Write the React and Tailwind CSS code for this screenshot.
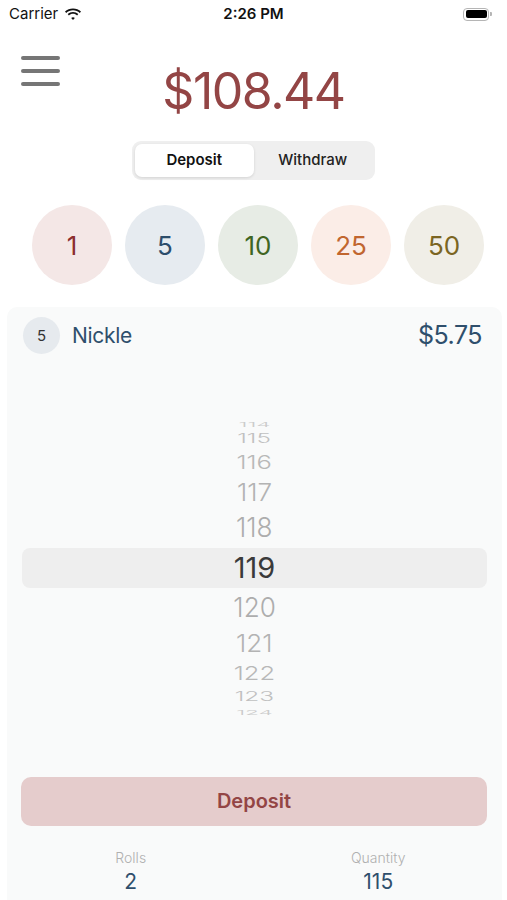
import React from "react";

const coins = [
  { v: "1", bg: "bg-[#f4e7e6]", fg: "text-[#8c2f2f]" },
  { v: "5", bg: "bg-[#e6ebf0]", fg: "text-[#2c4d6b]" },
  { v: "10", bg: "bg-[#e7ece5]", fg: "text-[#3f6522]" },
  { v: "25", bg: "bg-[#fbede7]", fg: "text-[#c1662f]" },
  { v: "50", bg: "bg-[#f0eee7]", fg: "text-[#7b6522]" },
];

const picker = [
  { n: "114", h: "h-[10px]", t: "font-light scale-x-[0.78] scale-y-[0.22] text-[#cbcbcb]" },
  { n: "115", h: "h-[18px]", t: "font-light scale-x-[0.84] scale-y-[0.45] text-[#c0c0c0]" },
  { n: "116", h: "h-[30px]", t: "font-light scale-x-[0.88] scale-y-[0.65] text-[#b8b8b8]" },
  { n: "117", h: "h-[30px]", t: "font-light scale-x-[0.9] scale-y-[0.82] text-[#b3b3b3]" },
  { n: "118", h: "h-[40px]", t: "font-light scale-x-[0.9] scale-y-[0.94] text-[#adadad]" },
  { n: "119", h: "h-[40px]", t: "font-normal text-[#3a3a3a]", sel: true },
  { n: "120", h: "h-[40px]", t: "font-light scale-x-[0.9] scale-y-[0.94] text-[#adadad]" },
  { n: "121", h: "h-[32px]", t: "font-light scale-x-[0.9] scale-y-[0.82] text-[#b3b3b3]" },
  { n: "122", h: "h-[28px]", t: "font-light scale-x-[0.88] scale-y-[0.65] text-[#b8b8b8]" },
  { n: "123", h: "h-[18px]", t: "font-light scale-x-[0.84] scale-y-[0.45] text-[#c0c0c0]" },
  { n: "124", h: "h-[14px]", t: "font-light scale-x-[0.78] scale-y-[0.22] text-[#cbcbcb]" },
];

function Wifi() {
  return (
    <svg width="18" height="13" viewBox="0 0 18 13" className="ml-[6px]">
      <path d="M9 2.2c2.6 0 5 1 6.8 2.7l1.2-1.3C14.9 1.6 12.1.4 9 .4S3.1 1.6 1 3.6l1.2 1.3C4 3.2 6.4 2.2 9 2.2z" fill="#111" />
      <path d="M9 5.8c1.6 0 3 .6 4.1 1.6l1.2-1.3C12.9 4.8 11 4 9 4s-3.9.8-5.3 2.1l1.2 1.3C6 6.4 7.4 5.8 9 5.8z" fill="#111" />
      <path d="M9 9.2c.7 0 1.3.3 1.8.7L9 12 7.2 9.9c.5-.4 1.1-.7 1.8-.7z" fill="#111" />
    </svg>
  );
}

function Battery() {
  return (
    <div className="flex items-center">
      <div className="w-[26px] h-[13px] rounded-[4px] border border-[#b5b5b5] p-[1.5px]">
        <div className="w-full h-full rounded-[2px] bg-black" />
      </div>
      <div className="w-[2px] h-[4px] rounded-r-[1px] bg-[#b5b5b5] ml-[1px]" />
    </div>
  );
}

export default function App() {
  return (
    <div className="w-[507px] h-[900px] bg-white overflow-hidden font-['Inter','Liberation_Sans',sans-serif] flex flex-col">
      {/* status bar */}
      <div className="h-[28px] grid grid-cols-3 items-center px-[9px] text-[15px] text-[#111]">
        <div className="flex items-center">
          <span>Carrier</span>
          <Wifi />
        </div>
        <div className="text-center font-semibold">2:26 PM</div>
        <div className="flex justify-end pr-[6px]">
          <Battery />
        </div>
      </div>

      {/* header */}
      <div className="grid grid-cols-[1fr_auto_1fr]">
        <div className="pl-[21px] pt-[28px] flex flex-col gap-[9px]">
          <div className="w-[39px] h-[4px] rounded-full bg-[#767676]" />
          <div className="w-[39px] h-[4px] rounded-full bg-[#767676]" />
          <div className="w-[39px] h-[4px] rounded-full bg-[#767676]" />
        </div>
        <div className="pt-[38px] text-[50px] leading-[50px] text-[#934545] tracking-[-1.5px]">$108.44</div>
        <div />
      </div>

      {/* segmented */}
      <div className="flex justify-center mt-[25px]">
        <div className="w-[243px] h-[39px] rounded-[9px] bg-[#efefef] p-[3px] grid grid-cols-2">
          <div className="rounded-[7px] bg-white shadow-[0_1px_3px_rgba(0,0,0,0.12)] flex items-center justify-center text-[15px] font-semibold text-[#111]">
            Deposit
          </div>
          <div className="flex items-center justify-center text-[15px] font-medium text-[#222]">Withdraw</div>
        </div>
      </div>

      {/* coins */}
      <div className="flex gap-[13px] pl-[32px] mt-[25px]">
        {coins.map((c) => (
          <div
            key={c.v}
            className={`w-[80px] h-[80px] rounded-full flex items-center justify-center text-[26px] ${c.bg} ${c.fg}`}
          >
            {c.v}
          </div>
        ))}
      </div>

      {/* panel */}
      <div className="mt-[22px] ml-[7px] mr-[5px] flex-1 rounded-t-[10px] bg-[#f9fafa] flex flex-col">
        <div className="flex items-center pt-[10px] pl-[16px] pr-[20px]">
          <div className="w-[37px] h-[37px] rounded-full bg-[#e6eaee] flex items-center justify-center text-[15px] text-[#333]">
            5
          </div>
          <div className="ml-[12px] text-[21px] text-[#2f4f6c] tracking-[-0.3px]">Nickle</div>
          <div className="ml-auto text-[25px] text-[#2f4f6c] tracking-[-0.5px]">$5.75</div>
        </div>

        <div className="mt-[65px] px-[15px] flex flex-col">
          {picker.map((p) => (
            <div
              key={p.n}
              className={`${p.h} flex items-center justify-center ${p.sel ? "bg-[#eeeeee] rounded-[8px]" : ""}`}
            >
              <span className={`inline-block text-[29px] leading-none ${p.t}`}>{p.n}</span>
            </div>
          ))}
        </div>

        <div className="mt-[57px] pl-[14px] pr-[15px]">
          <div className="h-[49px] rounded-[10px] bg-[#e5cccc] flex items-center justify-center text-[20px] font-semibold text-[#934545]">
            Deposit
          </div>
        </div>

        <div className="grid grid-cols-2 mt-[23px]">
          <div className="flex flex-col items-center">
            <div className="text-[14px] leading-[17px] text-[#b0b0b0] font-light">Rolls</div>
            <div className="text-[21px] leading-[26px] text-[#2f4f6c] mt-[3px]">2</div>
          </div>
          <div className="flex flex-col items-center">
            <div className="text-[14px] leading-[17px] text-[#b0b0b0] font-light">Quantity</div>
            <div className="text-[21px] leading-[26px] text-[#2f4f6c] mt-[3px]">115</div>
          </div>
        </div>
      </div>
    </div>
  );
}
